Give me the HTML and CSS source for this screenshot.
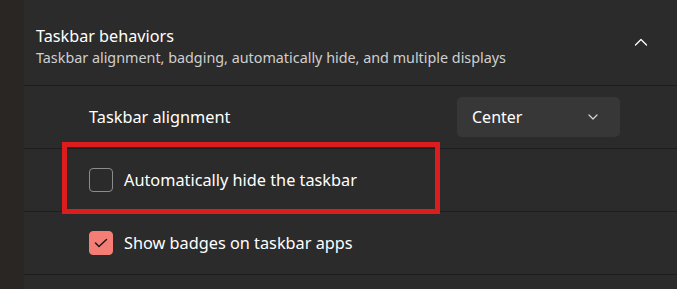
FILE: index.html
```html
<!DOCTYPE html>
<html lang="en">
<head>
  <meta charset="utf-8" />
  <meta name="viewport" content="width=device-width,initial-scale=1" />
  <title>Taskbar behaviors</title>
  <link rel="stylesheet" href="styles.css">
</head>
<body>
  <div class="side"></div>
  <div class="card">
    <div class="head">
      <div class="head-text">
        <div class="title">Taskbar behaviors</div>
        <div class="desc">Taskbar alignment, badging, automatically hide, and multiple displays</div>
      </div>
      <svg class="chev-up" width="14" height="8" viewBox="0 0 14 8"><path d="M1.5 7 L7 1.5 L12.5 7" fill="none" stroke="#fff" stroke-width="1.3" stroke-linecap="round" stroke-linejoin="round"/></svg>
    </div>

    <div class="row">
      <span class="label">Taskbar alignment</span>
      <div class="select">
        <span>Center</span>
        <svg width="10" height="6" viewBox="0 0 10 6"><path d="M1 1 L5 5 L9 1" fill="none" stroke="#d6d6d6" stroke-width="1.2" stroke-linecap="round" stroke-linejoin="round"/></svg>
      </div>
    </div>

    <div class="row mark">
      <span class="box"></span>
      <span class="label">Automatically hide the taskbar</span>
      <div class="highlight"></div>
    </div>

    <div class="row">
      <span class="box on">
        <svg width="14" height="10" viewBox="0 0 14 10"><path d="M1.5 5 L5 8.5 L12.5 1.5" fill="none" stroke="#1c1a1a" stroke-width="1.5" stroke-linecap="round" stroke-linejoin="round"/></svg>
      </span>
      <span class="label">Show badges on taskbar apps</span>
    </div>

    <div class="tail"></div>
  </div>
</body>
</html>
```

FILE: styles.css
```css
:root{
  --page:#2a2624; --card:#2b2b2b; --line:#1e1e1e; --text:#ffffff; --muted:#cfcfcf;
  --field:#373737; --accent:#f47d76; --red:#dc1d1d;
}
*{box-sizing:border-box;margin:0;padding:0}
body{background:var(--page);color:var(--text);font-family:'Noto Sans',sans-serif;display:flex;height:289px;overflow:hidden}
.side{width:24px;flex:none}
.card{flex:1;background:var(--card);display:flex;flex-direction:column}
.head{height:86px;display:flex;align-items:center;justify-content:space-between;padding:8px 29px 0 12px;border-bottom:1px solid var(--line)}
.title{font-size:16.2px;line-height:22px}
.desc{font-size:14.35px;line-height:21px;color:var(--muted)}
.chev-up{margin-top:-9px}
.row{height:63px;flex:none;display:flex;align-items:center;gap:11px;padding:0 57px 0 65px;border-bottom:1px solid var(--line);font-size:16.3px;position:relative}
.row .label{flex:1}
.select{width:163px;height:40px;background:var(--field);border-radius:5px;display:flex;align-items:center;justify-content:space-between;padding:0 22px 0 15px;font-size:16px}
.box{width:24px;height:24px;border:1px solid #8c8c8c;border-radius:4px;flex:none;display:flex;align-items:center;justify-content:center}
.box.on{background:var(--accent);border-color:var(--accent)}
.highlight{position:absolute;left:38px;top:-7px;width:378px;height:72px;border:5px solid var(--red)}
.tail{flex:1}
```
